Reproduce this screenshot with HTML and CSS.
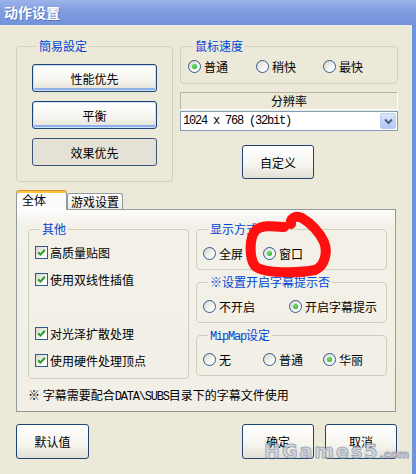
FILE: index.html
```html
<!DOCTYPE html>
<html lang="zh">
<head>
    <meta charset="UTF-8">
    <title>动作设置</title>
    <link rel="stylesheet" href="styles.css">
</head>
<body>
    <div class="window">
        <div class="titlebar">动作设置</div>
        <div class="frame">
            <div class="top-row">
                <fieldset class="group easy">
                    <legend>簡易設定</legend>
                    <button class="btn glow">性能优先</button>
                    <button class="btn glow">平衡</button>
                    <button class="btn flat">效果优先</button>
                </fieldset>
                <div class="right-col">
                    <fieldset class="group speed">
                        <legend>鼠标速度</legend>
                        <div class="row">
                            <label class="radio w68"><i class="on"></i>普通</label>
                            <label class="radio w67"><i></i>稍快</label>
                            <label class="radio"><i></i>最快</label>
                        </div>
                    </fieldset>
                    <div class="res-head">分辨率</div>
                    <div class="select">
                        <span class="mono">1024 x 768 (32bit)</span>
                        <span class="arrow">
                            <svg width="9" height="7" viewBox="0 0 9 7"><path d="M1 1.5 L4.5 5 L8 1.5" fill="none" stroke="#4d6185" stroke-width="2"/></svg>
                        </span>
                    </div>
                    <button class="btn custom">自定义</button>
                </div>
            </div>

            <div class="tabs">
                <div class="tab active">全体</div>
                <div class="tab">游戏设置</div>
            </div>
            <div class="panel">
                <div class="panel-row">
                    <fieldset class="group other">
                        <legend>其他</legend>
                        <label class="check"><i><svg width="9" height="9" viewBox="0 0 9 9"><path d="M1.2 4.2 L3.4 6.6 L7.8 1.8" fill="none" stroke="#21a121" stroke-width="2"/></svg></i>高质量贴图</label>
                        <label class="check"><i><svg width="9" height="9" viewBox="0 0 9 9"><path d="M1.2 4.2 L3.4 6.6 L7.8 1.8" fill="none" stroke="#21a121" stroke-width="2"/></svg></i>使用双线性插值</label>
                        <div class="check"></div>
                        <label class="check"><i><svg width="9" height="9" viewBox="0 0 9 9"><path d="M1.2 4.2 L3.4 6.6 L7.8 1.8" fill="none" stroke="#21a121" stroke-width="2"/></svg></i>对光泽扩散处理</label>
                        <label class="check"><i><svg width="9" height="9" viewBox="0 0 9 9"><path d="M1.2 4.2 L3.4 6.6 L7.8 1.8" fill="none" stroke="#21a121" stroke-width="2"/></svg></i>使用硬件处理顶点</label>
                    </fieldset>
                    <div class="panel-right">
                        <fieldset class="group small">
                            <legend>显示方式</legend>
                            <div class="row">
                                <label class="radio w60"><i></i>全屏</label>
                                <label class="radio"><i class="on"></i>窗口</label>
                            </div>
                        </fieldset>
                        <fieldset class="group small">
                            <legend>※设置开启字幕提示否</legend>
                            <div class="row">
                                <label class="radio w86"><i></i>不开启</label>
                                <label class="radio"><i class="on"></i>开启字幕提示</label>
                            </div>
                        </fieldset>
                        <fieldset class="group small">
                            <legend><span class="mono">MipMap</span>设定</legend>
                            <div class="row">
                                <label class="radio w60"><i></i>无</label>
                                <label class="radio w60"><i></i>普通</label>
                                <label class="radio"><i class="on"></i>华丽</label>
                            </div>
                        </fieldset>
                    </div>
                </div>
                <p class="note">※ 字幕需要配合<span class="mono">DATA\SUBS</span>目录下的字幕文件使用</p>
            </div>

            <div class="bottom">
                <button class="btn big">默认值</button>
                <div class="ok-cancel">
                    <button class="btn big">确定</button>
                    <button class="btn big">取消</button>
                </div>
            </div>
        </div>

        <svg class="mark" width="416" height="474" viewBox="0 0 416 474">
            <path d="M284 227 C272 226, 262 225, 256 230 C249 237, 249 258, 255 266 C263 274, 300 273, 315 270 C325 266, 328 252, 324 242 C320 233, 311 223, 302 218 C296 215, 290 218, 291 224" fill="none" stroke="#ff1010" stroke-width="10" stroke-linecap="round" stroke-linejoin="round"/>
        </svg>
        <div class="watermark">HGames5<span>.com</span></div>
    </div>
</body>
</html>
```

FILE: styles.css
```css
body {
    margin: 0;
    background: #ece9d8;
    font-family: "Noto Sans CJK SC", sans-serif;
    font-size: 12px;
    color: #000;
}
.window {
    position: relative;
    width: 416px;
    height: 474px;
    overflow: hidden;
}
.titlebar {
    height: 25px;
    line-height: 25px;
    padding-left: 4px;
    color: #fff;
    font-size: 14px;
    font-weight: bold;
    background: linear-gradient(#9cb4ea, #7f9cde 45%, #7393da);
    text-shadow: 1px 1px 0 #5a76bb;
}
.frame {
    box-sizing: border-box;
    height: 449px;
    padding: 14px 0 0 16px;
    border-right: 4px solid #7193dc;
}
.mono {
    font-family: "Liberation Mono", monospace;
    font-size: 12px;
    letter-spacing: -1.2px;
}

/* group boxes */
.group {
    box-sizing: border-box;
    margin: 0;
    min-width: 0;
    border: 1px solid #d0d0bf;
    border-radius: 4px;
}
.group legend {
    height: 14px;
    line-height: 14px;
    padding: 0 2px;
    margin-left: 5px;
    color: #0046d5;
}
.row {
    display: flex;
    height: 14px;
}
.radio, .check {
    display: flex;
    align-items: center;
    white-space: nowrap;
}
.radio {
    height: 14px;
}
.radio i {
    box-sizing: border-box;
    flex: none;
    display: flex;
    align-items: center;
    justify-content: center;
    width: 13px;
    height: 13px;
    margin-right: 3px;
    border: 1px solid #2f5b8a;
    border-radius: 50%;
    background: linear-gradient(135deg, #d6d5cc, #fff 80%);
}
.radio i.on::after {
    content: "";
    width: 5px;
    height: 5px;
    border-radius: 50%;
    background: radial-gradient(circle at 40% 40%, #6ee86e, #1f9a1f);
}
.w60 { width: 60px; }
.w67 { width: 67px; }
.w68 { width: 68px; }
.w86 { width: 86px; }

/* buttons */
.btn {
    box-sizing: border-box;
    padding: 0;
    font-family: "Noto Sans CJK SC", sans-serif;
    font-size: 12px;
    color: #000;
    border: 1px solid #1d4474;
    border-radius: 3px;
    background: linear-gradient(#fff, #f5f4ee 60%, #e3e0d4);
}
.btn.glow {
    box-shadow: inset 0 0 0 1px #cde0fb, inset 0 -2px 0 1px #8fb1ea;
}
.btn.flat {
    background: #e4e1d6;
    border-color: #3a5778;
}

/* top area */
.top-row {
    display: flex;
    gap: 7px;
}
.easy {
    display: flex;
    flex-direction: column;
    gap: 9px;
    width: 157px;
    padding: 11px 15px 15px;
}
.easy .btn {
    height: 28px;
}
.right-col {
    width: 218px;
}
.speed {
    width: 218px;
    padding: 6px 0 10px 7px;
}
.res-head {
    box-sizing: border-box;
    height: 18px;
    margin-top: 8px;
    line-height: 16px;
    text-align: center;
    border: 1px solid;
    border-color: #b8b5a6 #fff #fff #b8b5a6;
}
.select {
    box-sizing: border-box;
    display: flex;
    align-items: center;
    justify-content: space-between;
    height: 20px;
    margin-top: 1px;
    padding-left: 2px;
    background: #fff;
    border: 1px solid #7f9db9;
}
.arrow {
    box-sizing: border-box;
    display: flex;
    align-items: center;
    justify-content: center;
    width: 16px;
    height: 16px;
    margin-right: 1px;
    border: 1px solid #bccff4;
    border-radius: 2px;
    background: linear-gradient(#dbe6fc, #b3c7f5);
}
.custom {
    display: block;
    width: 72px;
    height: 34px;
    margin: 14px 0 0 62px;
}

/* tabs */
.tabs {
    position: relative;
    z-index: 1;
    display: flex;
    align-items: flex-end;
    height: 20px;
    margin: 8px 0 -1px;
}
.tab {
    box-sizing: border-box;
    height: 16px;
    margin-bottom: 1px;
    padding-left: 3px;
    width: 56px;
    line-height: 15px;
    border: 1px solid #919b9c;
    border-bottom: none;
    border-radius: 3px 3px 0 0;
    background: linear-gradient(#fff, #ecebe5);
}
.tab.active {
    width: 51px;
    height: 20px;
    margin-bottom: 0;
    padding-left: 5px;
    line-height: 18px;
    border-top-color: #e68b2c;
    background: #fcfcfe;
    box-shadow: inset 0 2px 0 #ffc73c;
}
.panel {
    box-sizing: border-box;
    width: 380px;
    height: 203px;
    padding: 12px 8px 8px 11px;
    border: 1px solid #919b9c;
    background: linear-gradient(#fcfcfb, #f2f0e7 16px, #f1efe6);
}
.panel-row {
    display: flex;
    gap: 7px;
}
.other {
    width: 161px;
    padding: 3px 0 4px 6px;
}
.check {
    height: 27px;
}
.check i {
    box-sizing: border-box;
    flex: none;
    display: flex;
    align-items: center;
    justify-content: center;
    width: 13px;
    height: 13px;
    margin-right: 2px;
    border: 1px solid #2f5b8a;
    background: linear-gradient(135deg, #d6d5cc, #fff 80%);
}
.panel-right {
    display: flex;
    flex-direction: column;
    gap: 5px;
    width: 191px;
}
.small {
    width: 191px;
    padding: 10px 0 9px 6px;
}
.note {
    margin: 9px 0 0;
    height: 14px;
    line-height: 14px;
}

/* bottom buttons */
.bottom {
    display: flex;
    justify-content: space-between;
    width: 381px;
    margin-top: 12px;
}
.big {
    width: 72px;
    height: 35px;
}
.bottom > .big {
    width: 73px;
}
.ok-cancel {
    display: flex;
    gap: 11px;
}

/* annotation and watermark drawn over the dialog */
.mark {
    position: absolute;
    left: 0;
    top: 0;
    pointer-events: none;
    filter: blur(0.7px);
}
.watermark {
    position: absolute;
    left: 264px;
    top: 443px;
    font-family: "DejaVu Sans", sans-serif;
    font-size: 19px;
    font-weight: bold;
    line-height: 17px;
    letter-spacing: 2px;
    color: rgba(205, 211, 224, 0.85);
    -webkit-text-stroke: 1px rgba(140, 150, 172, 0.75);
    pointer-events: none;
}
.watermark span {
    font-size: 11px;
    letter-spacing: 0;
}
```
